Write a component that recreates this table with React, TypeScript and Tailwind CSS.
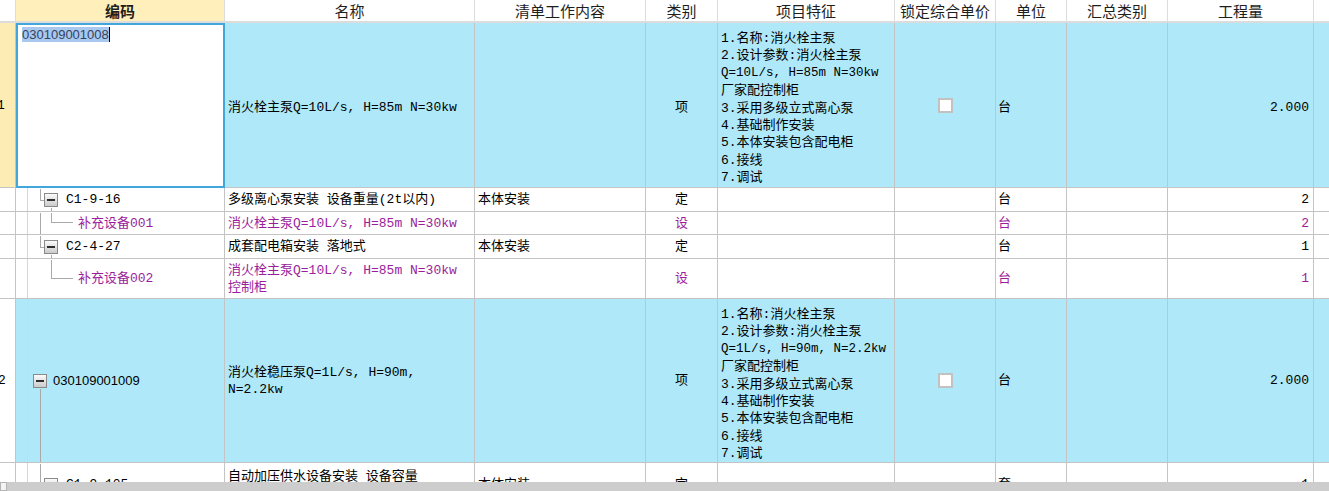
import React from "react";

const grid =
  "grid grid-cols-[16px_209px_250px_171px_72px_177px_101px_71px_101px_146px_15px]";
const cell = "border-r border-b border-[#c4c4c4] flex items-center overflow-hidden whitespace-nowrap";
const purple = "text-[#9b1d9b]";
const blue = "bg-[#aee8f9]";

type Seg = [number, number, number, number];

function TreeLines({ h, segs }: { h: number; segs: Seg[] }) {
  return (
    <svg className="absolute left-0 top-0" width={209} height={h} shapeRendering="crispEdges">
      <line x1={11.5} y1={0} x2={11.5} y2={h} stroke="#d6d6d6" strokeWidth={1} />
      {segs.map((s, i) => (
        <line key={i} x1={s[0] + 0.5} y1={s[1] + 0.5} x2={s[2] + 0.5} y2={s[3] + 0.5} stroke="#a9a9a9" strokeWidth={1} />
      ))}
    </svg>
  );
}

function MinusBox() {
  return (
    <div className="w-[14px] h-[14px] shrink-0 border border-[#8a8a8a] bg-linear-to-b from-[#fbfbfb] to-[#cbcbcb] flex items-center justify-center">
      <div className="w-[8px] h-[2px] bg-[#2e2e2e]" />
    </div>
  );
}

function CheckBox() {
  return <div className="w-[15px] h-[15px] bg-white border-2 border-[#c2c2c2]" />;
}

function Feature({ q }: { q: string }) {
  const lines = [
    "1.名称:消火栓主泵",
    "2.设计参数:消火栓主泵",
    q,
    "厂家配控制柜",
    "3.采用多级立式离心泵",
    "4.基础制作安装",
    "5.本体安装包含配电柜",
    "6.接线",
    "7.调试",
  ];
  return (
    <div className="flex flex-col leading-[17.4px]">
      {lines.map((l, i) => (
        <div key={i} className={i === 2 ? "text-[12.5px]" : ""}>
          {l}
        </div>
      ))}
    </div>
  );
}

export default function App() {
  return (
    <div className="w-[1329px] h-[491px] flex flex-col bg-white overflow-hidden text-[13px] text-black font-['Liberation_Mono','Noto_Sans_CJK_SC',monospace] leading-[17px]">
      <div className="flex-1 overflow-hidden">
        {/* header */}
        <div className={`${grid} h-[23px] font-['Noto_Sans_CJK_SC',sans-serif] text-[15px] text-[#1e1e1e]`}>
          <div className="border-r border-b-2 border-[#dcdcdc] bg-white" />
          <div className="border-r border-b-2 border-[#dcdcdc] bg-[#fff0bb] flex items-center justify-center font-bold">编码</div>
          <div className="border-r border-b-2 border-[#dcdcdc] flex items-center justify-center">名称</div>
          <div className="border-r border-b-2 border-[#dcdcdc] flex items-center justify-center">清单工作内容</div>
          <div className="border-r border-b-2 border-[#dcdcdc] flex items-center justify-center">类别</div>
          <div className="border-r border-b-2 border-[#dcdcdc] flex items-center justify-center">项目特征</div>
          <div className="border-r border-b-2 border-[#dcdcdc] flex items-center justify-center whitespace-nowrap">锁定综合单价</div>
          <div className="border-r border-b-2 border-[#dcdcdc] flex items-center justify-center">单位</div>
          <div className="border-r border-b-2 border-[#dcdcdc] flex items-center justify-center">汇总类别</div>
          <div className="border-r border-b-2 border-[#dcdcdc] flex items-center justify-center">工程量</div>
          <div className="border-b-2 border-[#dcdcdc]" />
        </div>

        {/* row 1 */}
        <div className={`${grid} h-[165px]`}>
          <div className={`${cell} bg-[#fdecb4]`}>
            <span className="-ml-[3px]">1</span>
          </div>
          <div className="border-2 border-[#41a6dc] bg-white flex items-start pl-[4px] pt-[2px]">
            <span className="bg-[#a8c8ef] text-[#34435e] leading-[15px] font-['Liberation_Sans','Noto_Sans_CJK_SC',sans-serif]">030109001008</span>
            <span className="w-px h-[15px] bg-black" />
          </div>
          <div className={`${cell} ${blue} pl-[3px] pt-[4px]`}>消火栓主泵Q=10L/s, H=85m N=30kw</div>
          <div className={`${cell} ${blue}`} />
          <div className={`${cell} ${blue} justify-center pt-[4px]`}>项</div>
          <div className={`${cell} ${blue} items-start! pt-[7px] pl-[3px]`}>
            <Feature q="Q=10L/s, H=85m N=30kw" />
          </div>
          <div className={`${cell} ${blue} justify-center`}>
            <CheckBox />
          </div>
          <div className={`${cell} ${blue} pl-[2px] pt-[4px]`}>台</div>
          <div className={`${cell} ${blue}`} />
          <div className={`${cell} ${blue} justify-end pr-[4px] pt-[4px]`}>2.000</div>
          <div className={`border-b border-[#c4c4c4] ${blue}`} />
        </div>

        {/* row 2 */}
        <div className={`${grid} h-[24px]`}>
          <div className={cell} />
          <div className={`${cell} relative pl-[28px]`}>
            <TreeLines h={24} segs={[[24, 0, 24, 12], [24, 12, 28, 12], [35, 19, 35, 24]]} />
            <div className="relative flex items-center gap-[8px]">
              <MinusBox />
              <span>C1-9-16</span>
            </div>
          </div>
          <div className={`${cell} pl-[3px]`}>多级离心泵安装 设备重量(2t以内)</div>
          <div className={`${cell} pl-[3px]`}>本体安装</div>
          <div className={`${cell} justify-center`}>定</div>
          <div className={cell} />
          <div className={cell} />
          <div className={`${cell} pl-[2px]`}>台</div>
          <div className={cell} />
          <div className={`${cell} justify-end pr-[4px]`}>2</div>
          <div className="border-b border-[#c4c4c4]" />
        </div>

        {/* row 3 */}
        <div className={`${grid} h-[23px] ${purple}`}>
          <div className={cell} />
          <div className={`${cell} relative pl-[62px]`}>
            <TreeLines h={23} segs={[[24, 0, 24, 23], [35, 0, 35, 10], [35, 10, 56, 10]]} />
            <span className="relative">补充设备001</span>
          </div>
          <div className={`${cell} pl-[3px]`}>消火栓主泵Q=10L/s, H=85m N=30kw</div>
          <div className={cell} />
          <div className={`${cell} justify-center`}>设</div>
          <div className={cell} />
          <div className={cell} />
          <div className={`${cell} pl-[2px]`}>台</div>
          <div className={cell} />
          <div className={`${cell} justify-end pr-[4px]`}>2</div>
          <div className="border-b border-[#c4c4c4]" />
        </div>

        {/* row 4 */}
        <div className={`${grid} h-[24px]`}>
          <div className={cell} />
          <div className={`${cell} relative pl-[28px]`}>
            <TreeLines h={24} segs={[[24, 0, 24, 12], [24, 12, 28, 12], [35, 19, 35, 24]]} />
            <div className="relative flex items-center gap-[8px]">
              <MinusBox />
              <span>C2-4-27</span>
            </div>
          </div>
          <div className={`${cell} pl-[3px]`}>成套配电箱安装 落地式</div>
          <div className={`${cell} pl-[3px]`}>本体安装</div>
          <div className={`${cell} justify-center`}>定</div>
          <div className={cell} />
          <div className={cell} />
          <div className={`${cell} pl-[2px]`}>台</div>
          <div className={cell} />
          <div className={`${cell} justify-end pr-[4px]`}>1</div>
          <div className="border-b border-[#c4c4c4]" />
        </div>

        {/* row 5 */}
        <div className={`${grid} h-[40px] ${purple}`}>
          <div className={cell} />
          <div className={`${cell} relative pl-[62px]`}>
            <TreeLines h={40} segs={[[35, 0, 35, 19], [35, 19, 56, 19]]} />
            <span className="relative">补充设备002</span>
          </div>
          <div className={`${cell} pl-[3px]`}>
            <div className="flex flex-col">
              <span>消火栓主泵Q=10L/s, H=85m N=30kw</span>
              <span>控制柜</span>
            </div>
          </div>
          <div className={cell} />
          <div className={`${cell} justify-center`}>设</div>
          <div className={cell} />
          <div className={cell} />
          <div className={`${cell} pl-[2px]`}>台</div>
          <div className={cell} />
          <div className={`${cell} justify-end pr-[4px]`}>1</div>
          <div className="border-b border-[#c4c4c4]" />
        </div>

        {/* row 6 */}
        <div className={`${grid} h-[164px]`}>
          <div className={cell}>
            <span className="-ml-[2px]">2</span>
          </div>
          <div className={`${cell} ${blue} relative pl-[17px]`}>
            <TreeLines h={164} segs={[[24, 89, 24, 164]]} />
            <div className="relative flex items-center gap-[6px]">
              <MinusBox />
              <span className="font-['Liberation_Sans',sans-serif]">030109001009</span>
            </div>
          </div>
          <div className={`${cell} ${blue} pl-[3px]`}>
            <div className="flex flex-col">
              <span>消火栓稳压泵Q=1L/s, H=90m,</span>
              <span>N=2.2kw</span>
            </div>
          </div>
          <div className={`${cell} ${blue}`} />
          <div className={`${cell} ${blue} justify-center`}>项</div>
          <div className={`${cell} ${blue} items-start! pt-[7px] pl-[3px]`}>
            <Feature q="Q=1L/s, H=90m, N=2.2kw" />
          </div>
          <div className={`${cell} ${blue} justify-center`}>
            <CheckBox />
          </div>
          <div className={`${cell} ${blue} pl-[2px]`}>台</div>
          <div className={`${cell} ${blue}`} />
          <div className={`${cell} ${blue} justify-end pr-[4px]`}>2.000</div>
          <div className={`border-b border-[#c4c4c4] ${blue}`} />
        </div>

        {/* row 7 */}
        <div className={`${grid} h-[44px]`}>
          <div className={cell} />
          <div className={`${cell} relative pl-[28px]`}>
            <TreeLines h={44} segs={[[24, 0, 24, 22], [24, 22, 28, 22]]} />
            <div className="relative flex items-center gap-[8px]">
              <MinusBox />
              <span>C1-9-105</span>
            </div>
          </div>
          <div className={`${cell} pl-[3px]`}>
            <div className="flex flex-col">
              <span>自动加压供水设备安装 设备容量</span>
              <span>(m3/h以内) 30</span>
            </div>
          </div>
          <div className={`${cell} pl-[3px]`}>本体安装</div>
          <div className={`${cell} justify-center`}>定</div>
          <div className={cell} />
          <div className={cell} />
          <div className={`${cell} pl-[2px]`}>套</div>
          <div className={cell} />
          <div className={`${cell} justify-end pr-[4px]`}>1</div>
          <div className="border-b border-[#c4c4c4]" />
        </div>
      </div>

      {/* horizontal scrollbar */}
      <div className="h-[9px] shrink-0 bg-[#cdcdcd] flex">
        <div className="w-[7px] h-full bg-[#f4f4f4] border border-[#b4b4b4]" />
      </div>
    </div>
  );
}
